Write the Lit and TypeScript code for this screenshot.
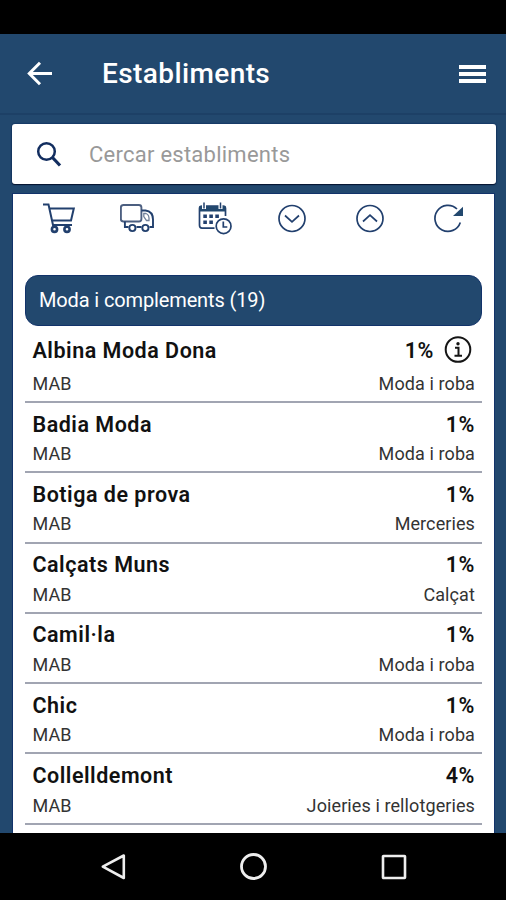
import { LitElement, html, css, svg, nothing } from "lit";
import { customElement, property } from "lit/decorators.js";

interface Shop {
  name: string;
  discount: string;
  kind: string;
  info?: boolean;
}

const SHOPS: Shop[] = [
  { name: "Albina Moda Dona", discount: "1%", kind: "Moda i roba", info: true },
  { name: "Badia Moda", discount: "1%", kind: "Moda i roba" },
  { name: "Botiga de prova", discount: "1%", kind: "Merceries" },
  { name: "Calçats Muns", discount: "1%", kind: "Calçat" },
  { name: "Camil·la", discount: "1%", kind: "Moda i roba" },
  { name: "Chic", discount: "1%", kind: "Moda i roba" },
  { name: "Collelldemont", discount: "4%", kind: "Joieries i rellotgeries" },
];

const TOOLS = [
  // cart
  svg`<path d="M1 3.500H6.500L11 24H30M8 7.500H31.800L29 19.500H10.200" stroke-width="2"/><circle cx="12.500" cy="28.300" r="2.600" stroke-width="2.600"/><circle cx="25" cy="28.300" r="2.600" stroke-width="2.600"/>`,
  // delivery truck
  svg`<rect x="0.900" y="4" width="20.500" height="16.500" rx="2.500" stroke="#4c5f80" stroke-width="1.900"/><path d="M21.400 9.500H25.500Q33 10.500 33 18.500V26H29.500M4.900 20.500V26H8.500M16.500 26H21.500" stroke-width="1.900"/><path d="M23.800 12.500V15.500L26.500 19.500H29Q29.500 13.500 26 12.500Z" stroke="#71809a" stroke-width="1.300"/><circle cx="12.400" cy="27" r="3.100" stroke-width="1.900"/><circle cx="25.400" cy="27" r="3.100" stroke-width="1.900"/>`,
  // calendar with clock
  svg`<path d="M16.500 27.200H4Q1.500 27.200 1.500 24.200V7.500Q1.500 5 4 5H25Q27.500 5 27.500 7.500V15"/><path d="M1.500 5H27.500V10.500H1.500Z" fill="#22486e" stroke="none"/><path d="M6 1.500V8M22.500 1.500V8" stroke="#fff" stroke-width="4"/><path d="M6 1.500V7.500M22.500 1.500V7.500" stroke-width="1.500"/><path d="M5.300 15.200h3.600M11.300 15.200h3.600M17.300 15.200h3.600M5.300 21.300h3.600M11.300 21.300h3.600" stroke-width="3.400"/><circle cx="25.600" cy="25.200" r="7.400" fill="#fff"/><path d="M25.300 20.500V26H29.300"/>`,
  // expand
  svg`<circle cx="17" cy="17.500" r="13"/><path d="M10 14.500L17 20.800L24 14.500"/>`,
  // collapse
  svg`<circle cx="17" cy="17.500" r="13"/><path d="M10 20.500L17 14.200L24 20.500"/>`,
  // refresh
  svg`<path d="M29.300 21.500A13 13 0 1 1 26 8"/><path d="M32 5.800V15H22Z" fill="#22486e" stroke="none"/>`,
];

@customElement("shop-row")
export class ShopRow extends LitElement {
  @property({ attribute: false }) shop!: Shop;

  static styles = css`
    :host { display: block; box-sizing: border-box; height: 70.300px; border-bottom: 2px solid #a1a5b2; padding: 6.100px 7px 0 7.500px; }
    :host([featured]) { height: 77px; padding-top: 9px; }
    .line { display: flex; justify-content: space-between; align-items: center; height: 30px; }
    .main { font-weight: 600; font-size: 21.500px; letter-spacing: 0.510px; color: #111; }
    .sub { height: 29px; font-size: 18px; letter-spacing: 0.100px; color: #333; font-weight: 400; }
    :host([featured]) .sub { margin-top: 3.500px; }
    .value { display: flex; align-items: center; gap: 10px; }
    .value svg { width: 28px; height: 28px; margin-right: 3px; }
  `;

  render() {
    const { name, discount, kind, info } = this.shop;
    return html`
      <div class="line main">
        <span>${name}</span>
        <span class="value"
          >${discount}${info
            ? html`<svg viewBox="0 0 28 28" fill="none" stroke="#151515" stroke-width="2">
                <circle cx="14" cy="13.500" r="12.300" />
                <path d="M11 11.800H14.500V19.500M10.500 19.800H18" />
                <circle cx="14" cy="7.800" r="1.700" fill="#151515" stroke="none" />
              </svg>`
            : nothing}</span
        >
      </div>
      <div class="line sub"><span>MAB</span><span>${kind}</span></div>
    `;
  }
}

@customElement("app-root")
export class AppRoot extends LitElement {
  static styles = css`
    :host { display: flex; flex-direction: column; width: 506px; height: 900px; overflow: hidden; background: #22486e; font-family: Roboto, "Liberation Sans", sans-serif; }
    .status { flex: none; height: 34px; background: #000; }
    .header { flex: none; box-sizing: border-box; height: 81px; display: flex; align-items: center; padding: 0 20px 0 26px; border-bottom: 2px solid #1d4066; color: #fff; }
    .back { width: 28px; height: 28px; }
    .title { margin: 0 auto 0 48px; font-size: 28px; font-weight: 500; letter-spacing: 0.400px; }
    .menu { width: 27px; height: 20px; }
    .search { flex: none; box-sizing: border-box; height: 60px; margin: 9px 10px 0 12px; padding: 0 24px; display: flex; align-items: center; background: #fff; border-radius: 3px; box-shadow: 0 1px 1px #06152f, 0 0 1px 1px #173a66; }
    .search svg { width: 26px; height: 26px; }
    .hint { margin-left: 27px; font-size: 22px; letter-spacing: 0.250px; color: #999; }
    .panel { flex: 1; min-height: 0; overflow: hidden; box-sizing: border-box; margin: 10px 12px 0 13px; padding: 0 12px; background: #fff; box-shadow: 0 0 0 1px #12336a; }
    .tools { display: flex; height: 81px; padding: 7px 0 0 17px; box-sizing: border-box; gap: 43.800px; }
    .tools svg { flex: none; width: 34px; height: 34px; }
    .category { box-sizing: border-box; height: 51px; padding: 0 13px 1px; display: flex; align-items: center; border-radius: 13px; border: 1px solid #12336a; background: #22486e; color: #fff; font-size: 20px; letter-spacing: -0.130px; }
    .nav { flex: none; height: 67px; display: flex; align-items: center; justify-content: center; gap: 112px; background: #000; }
    .nav svg { width: 28px; height: 28px; }
  `;

  render() {
    return html`
      <div class="status"></div>
      <header class="header">
        <svg class="back" viewBox="0 0 28 28" fill="none" stroke="#fff" stroke-width="3"><path d="M26 13.500H3.500M14 2.800L3.300 13.500L14 24.200" /></svg>
        <h1 class="title">Establiments</h1>
        <svg class="menu" viewBox="0 0 27 20" fill="#fff"><path d="M0 1H27V5H0ZM0 8H27V12H0ZM0 15H27V19H0Z" /></svg>
      </header>
      <div class="search">
        <svg viewBox="0 0 26 26" fill="none" stroke="#122d5f"><circle cx="10.500" cy="10.500" r="8.300" stroke-width="2.500" /><path d="M16 16L24 24.500" stroke-width="3.200" /></svg>
        <span class="hint">Cercar establiments</span>
      </div>
      <main class="panel">
        <div class="tools">
          ${TOOLS.map((t) => html`<svg viewBox="0 0 34 34" fill="none" stroke="#22406e" stroke-width="1.700">${t}</svg>`)}
        </div>
        <div class="category">Moda i complements (19)</div>
        ${SHOPS.map((s) => html`<shop-row .shop=${s} ?featured=${!!s.info}></shop-row>`)}
      </main>
      <footer class="nav">
        <svg viewBox="0 0 28 28" fill="none" stroke="#eee" stroke-width="2.600"><path d="M24.800 2.500V25L3.800 13.700Z" stroke-linejoin="round" /></svg>
        <svg viewBox="0 0 28 28" fill="none" stroke="#eee" stroke-width="2.800"><circle cx="14.500" cy="13.500" r="12" /></svg>
        <svg viewBox="0 0 28 28" fill="none" stroke="#eee" stroke-width="2.600"><rect x="4" y="3" width="22" height="22" rx="0.500" /></svg>
      </footer>
    `;
  }
}
